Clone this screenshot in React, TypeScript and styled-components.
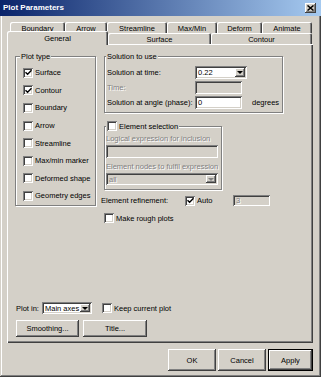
import React from "react";
import styled, { createGlobalStyle, css } from "styled-components";

const Global = createGlobalStyle`
  html, body { margin: 0; padding: 0; background: #D4D0C8; }
  body { font-family: "Liberation Sans", Arial, sans-serif; font-size: 7.5px; color: #000; }
  * { box-sizing: border-box; }
`;

const raised = css`
  box-shadow: inset -1px -1px #404040, inset 1px 1px #fff, inset -2px -2px #808080;
`;
const sunken = css`
  box-shadow: inset 1px 1px #808080, inset -1px -1px #fff, inset 2px 2px #404040, inset -2px -2px #D4D0C8;
`;
const disabledText = css`
  color: #808080;
  text-shadow: 1px 1px 0 #fff;
`;

const Window = styled.div`
  width: 321px;
  height: 377px;
  background: #D4D0C8;
  display: flex;
  flex-direction: column;
  box-shadow: inset -1px -1px #404040, inset 1px 1px #D4D0C8, inset -2px -2px #808080, inset 2px 2px #fff;
`;

const TitleBar = styled.div`
  height: 16px;
  flex: none;
  display: flex;
  align-items: center;
  justify-content: space-between;
  padding: 0 5px 0 3px;
  background: linear-gradient(to right, #0A246A, #A6CAF0);
`;

const Title = styled.span`
  color: #fff;
  font-weight: bold;
  font-size: 8px;
  line-height: 16px;
`;

const CloseBtn = styled.div`
  width: 11px;
  height: 10px;
  background: #D4D0C8;
  display: flex;
  align-items: center;
  justify-content: center;
  ${raised};
`;

const Content = styled.div`
  padding: 6px 0 0 7px;
  display: flex;
  flex-direction: column;
`;

const TabRow = styled.div<{ $indent: number }>`
  display: flex;
  height: 11px;
  padding-left: ${(p) => p.$indent}px;
`;

const Tab = styled.div<{ $w: number; $active?: boolean }>`
  width: ${(p) => p.$w}px;
  height: 11px;
  flex: none;
  overflow: hidden;
  text-align: center;
  line-height: 9px;
  padding-top: 2px;
  background: #D4D0C8;
  border-radius: 2px 2px 0 0;
  box-shadow: inset 1px 1px #fff, inset -1px 0 #404040, inset -2px 0 #808080;
  ${(p) =>
    p.$active &&
    css`
      position: relative;
      z-index: 2;
      height: 14px;
      margin-top: -2px;
      padding-top: 3px;
      line-height: 9px;
      box-shadow: inset 1px 1px #fff, inset -1px 0 #404040, inset -2px 0 #808080;
    `}
`;

const Panel = styled.div`
  width: 306px;
  height: 299px;
  display: flex;
  flex-direction: column;
  padding: 12px 0 6px 8px;
  box-shadow: inset 1px 1px #fff, inset -1px -1px #404040, inset -2px -2px #808080;
`;

const TopArea = styled.div`
  display: flex;
  gap: 8px;
  align-items: flex-start;
`;

const Group = styled.div<{ $w: number; $h: number; $pt: number; $pl: number }>`
  position: relative;
  width: ${(p) => p.$w}px;
  height: ${(p) => p.$h}px;
  padding: ${(p) => p.$pt}px 0 0 ${(p) => p.$pl}px;
  border: 1px solid #808080;
  box-shadow: inset 1px 1px #fff, 1px 1px #fff;
  flex: none;
`;

const Caption = styled.div<{ $top: number; $left: number }>`
  position: absolute;
  top: ${(p) => p.$top}px;
  left: ${(p) => p.$left}px;
  display: flex;
  align-items: center;
  gap: 2px;
  padding: 0 1px;
  line-height: 9px;
  background: #D4D0C8;
`;

const CheckRow = styled.div<{ $h: number; $ml?: number }>`
  display: flex;
  align-items: center;
  gap: 2px;
  height: ${(p) => p.$h}px;
  margin-left: ${(p) => p.$ml ?? 0}px;
  white-space: nowrap;
`;

const Box = styled.div`
  width: 10px;
  height: 10px;
  flex: none;
  background: #fff;
  display: flex;
  align-items: center;
  justify-content: center;
  ${sunken};
`;

const Check = ({ checked }: { checked?: boolean }) => (
  <Box>
    {checked && (
      <svg width="7" height="7" viewBox="0 0 7 7">
        <path d="M0.5 3.2 L2.6 5.3 L6.5 1.2" stroke="#000" strokeWidth="1.4" fill="none" />
      </svg>
    )}
  </Box>
);

const RightCol = styled.div`
  display: flex;
  flex-direction: column;
  width: 179px;
`;

const FormRow = styled.div`
  display: flex;
  align-items: center;
  height: 15px;
  white-space: nowrap;
`;

const FormLabel = styled.span<{ $w: number; $disabled?: boolean }>`
  width: ${(p) => p.$w}px;
  flex: none;
  ${(p) => p.$disabled && disabledText};
`;

const Field = styled.div<{ $w: number; $h: number; $disabled?: boolean }>`
  width: ${(p) => p.$w}px;
  height: ${(p) => p.$h}px;
  flex: none;
  display: flex;
  align-items: center;
  justify-content: space-between;
  padding: 2px 2px 2px 3px;
  line-height: 9px;
  background: ${(p) => (p.$disabled ? "#D4D0C8" : "#fff")};
  ${(p) => p.$disabled && disabledText};
  ${sunken};
`;

const DropBtn = styled.div`
  width: 10px;
  align-self: stretch;
  flex: none;
  background: #D4D0C8;
  display: flex;
  align-items: center;
  justify-content: center;
  text-shadow: none;
  ${raised};
`;

const Arrow = styled.div<{ $disabled?: boolean }>`
  width: 0;
  height: 0;
  border-left: 3px solid transparent;
  border-right: 3px solid transparent;
  border-top: 3px solid ${(p) => (p.$disabled ? "#808080" : "#000")};
`;

const Suffix = styled.span`
  margin-left: 10px;
`;

const GrayLabel = styled.div<{ $mt: number }>`
  margin-top: ${(p) => p.$mt}px;
  line-height: 9px;
  height: 9px;
  white-space: nowrap;
  ${disabledText};
`;

const Spaced = styled.div<{ $mt: number; $ml?: number }>`
  margin-top: ${(p) => p.$mt}px;
  margin-left: ${(p) => p.$ml ?? 0}px;
`;

const InlineText = styled.span<{ $w?: number; $ml?: number }>`
  ${(p) => p.$w !== undefined && css`width: ${p.$w}px; flex: none;`}
  margin-left: ${(p) => p.$ml ?? 0}px;
  white-space: nowrap;
`;

const Bottom = styled.div`
  margin-top: auto;
  padding-left: 1px;
  display: flex;
  flex-direction: column;
`;

const PlotInRow = styled.div`
  display: flex;
  align-items: center;
  height: 12px;
`;

const ButtonRow = styled.div<{ $gap: number; $end?: boolean }>`
  display: flex;
  gap: ${(p) => p.$gap}px;
  ${(p) => p.$end && css`width: 306px; justify-content: flex-end;`}
`;

const Button = styled.button<{ $w: number; $h: number; $default?: boolean }>`
  width: ${(p) => p.$w}px;
  height: ${(p) => p.$h}px;
  font: inherit;
  color: #000;
  background: #D4D0C8;
  border: none;
  padding: 0;
  ${raised};
  ${(p) =>
    p.$default &&
    css`
      box-shadow: inset 0 0 0 1px #000, inset -2px -2px #404040, inset 2px 2px #fff, inset -3px -3px #808080;
    `}
`;

const plotTypes: [string, boolean][] = [
  ["Surface", true],
  ["Contour", true],
  ["Boundary", false],
  ["Arrow", false],
  ["Streamline", false],
  ["Max/min marker", false],
  ["Deformed shape", false],
  ["Geometry edges", false],
];

const backTabs: [string, number][] = [
  ["Boundary", 55],
  ["Arrow", 42],
  ["Streamline", 60],
  ["Max/Min", 50],
  ["Deform", 45],
  ["Animate", 50],
];

export default function App() {
  return (
    <>
      <Global />
      <Window>
        <TitleBar>
          <Title>Plot Parameters</Title>
          <CloseBtn>
            <svg width="7" height="6" viewBox="0 0 7 6">
              <path d="M0.5 0.5 L6.5 5.5 M6.5 0.5 L0.5 5.5" stroke="#000" strokeWidth="1.5" />
            </svg>
          </CloseBtn>
        </TitleBar>
        <Content>
          <TabRow $indent={3}>
            {backTabs.map(([t, w]) => (
              <Tab key={t} $w={w}>
                {t}
              </Tab>
            ))}
          </TabRow>
          <TabRow $indent={0}>
            <Tab $w={101} $active>
              General
            </Tab>
            <Tab $w={103}>Surface</Tab>
            <Tab $w={101}>Contour</Tab>
          </TabRow>
          <Panel>
            <TopArea>
              <Group $w={81} $h={150} $pt={7} $pl={7}>
                <Caption $top={-5} $left={4}>Plot type</Caption>
                {plotTypes.map(([t, c]) => (
                  <CheckRow key={t} $h={17.6}>
                    <Check checked={c} />
                    <span>{t}</span>
                  </CheckRow>
                ))}
              </Group>
              <RightCol>
                <Group $w={179} $h={57} $pt={8} $pl={2}>
                  <Caption $top={-5} $left={1}>Solution to use</Caption>
                  <FormRow>
                    <FormLabel $w={88}>Solution at time:</FormLabel>
                    <Field $w={52} $h={13}>
                      <span>0.22</span>
                      <DropBtn>
                        <Arrow />
                      </DropBtn>
                    </Field>
                  </FormRow>
                  <FormRow>
                    <FormLabel $w={88} $disabled>
                      Time:
                    </FormLabel>
                    <Field $w={47} $h={13} $disabled />
                  </FormRow>
                  <FormRow>
                    <FormLabel $w={88}>Solution at angle (phase):</FormLabel>
                    <Field $w={47} $h={13}>
                      <span>0</span>
                    </Field>
                    <Suffix>degrees</Suffix>
                  </FormRow>
                </Group>
                <Spaced $mt={13}>
                  <Group $w={118} $h={64} $pt={7} $pl={1}>
                    <Caption $top={-6} $left={1}>
                      <Check />
                      <span>Element selection</span>
                    </Caption>
                    <GrayLabel $mt={0}>Logical expression for inclusion</GrayLabel>
                    <Spaced $mt={2}>
                      <Field $w={112} $h={13} $disabled />
                    </Spaced>
                    <GrayLabel $mt={4}>Element nodes to fulfil expression</GrayLabel>
                    <Spaced $mt={2}>
                      <Field $w={112} $h={12} $disabled>
                        <span>all</span>
                        <DropBtn>
                          <Arrow $disabled />
                        </DropBtn>
                      </Field>
                    </Spaced>
                  </Group>
                </Spaced>
                <Spaced $mt={5} $ml={-3}>
                  <CheckRow $h={11}>
                    <InlineText $w={82}>Element refinement:</InlineText>
                    <Check checked />
                    <InlineText $w={34}>Auto</InlineText>
                    <Field $w={37} $h={11} $disabled>
                      <span>3</span>
                    </Field>
                  </CheckRow>
                </Spaced>
                <Spaced $mt={7}>
                  <CheckRow $h={10}>
                    <Check />
                    <span>Make rough plots</span>
                  </CheckRow>
                </Spaced>
              </RightCol>
            </TopArea>
            <Bottom>
              <PlotInRow>
                <InlineText $w={26}>Plot in:</InlineText>
                <Field $w={50} $h={12}>
                  <span>Main axes</span>
                  <DropBtn>
                    <Arrow />
                  </DropBtn>
                </Field>
                <CheckRow $h={12} $ml={10}>
                  <Check />
                  <span>Keep current plot</span>
                </CheckRow>
              </PlotInRow>
              <Spaced $mt={6}>
                <ButtonRow $gap={4}>
                  <Button $w={63} $h={17}>Smoothing...</Button>
                  <Button $w={64} $h={17}>Title...</Button>
                </ButtonRow>
              </Spaced>
            </Bottom>
          </Panel>
          <Spaced $mt={6}>
            <ButtonRow $gap={2} $end>
              <Button $w={48} $h={22}>OK</Button>
              <Button $w={48} $h={22}>Cancel</Button>
              <Button $w={45} $h={22} $default>Apply</Button>
            </ButtonRow>
          </Spaced>
        </Content>
      </Window>
    </>
  );
}
